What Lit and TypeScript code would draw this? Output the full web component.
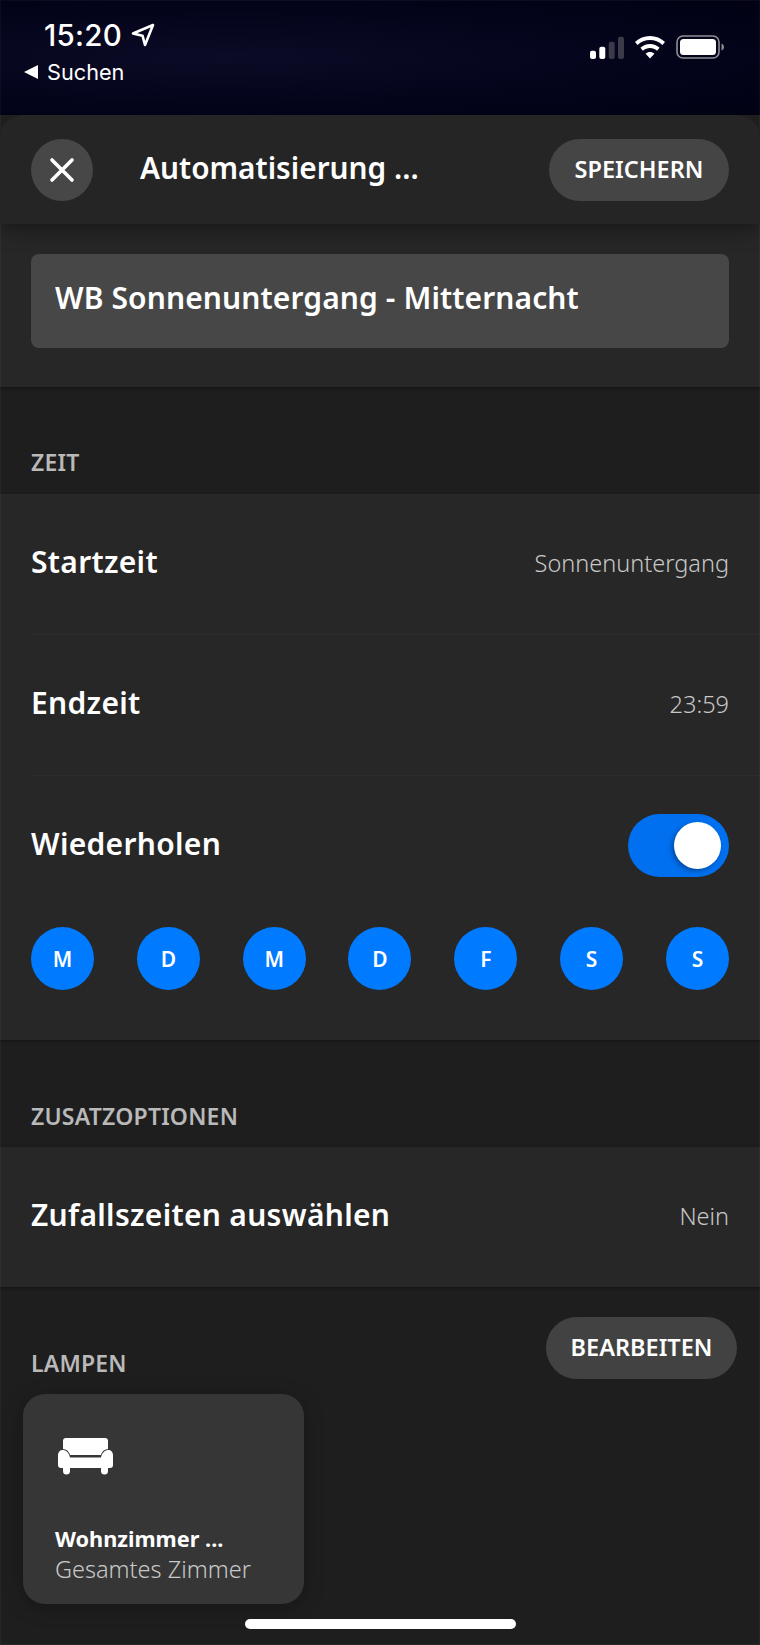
import { LitElement, html, css } from "lit";
import { customElement } from "lit/decorators.js";

const DAYS = ["M", "D", "M", "D", "F", "S", "S"];

@customElement("app-root")
export class AppRoot extends LitElement {
  static styles = css`
    :host { display: block; width: 760px; height: 1645px; overflow: hidden; background: #1e1e1e; font-family: "Noto Sans", sans-serif; color: #fff; }
    .wrap { position: relative; height: 1645px; }
    .wrap::after { content: ""; position: absolute; inset: 0; box-shadow: inset 0 0 0 1px rgba(255,255,255,.04); pointer-events: none; }
    .status { height: 115px; box-sizing: border-box; background: radial-gradient(ellipse at 30% 50%, #0b0b26 0%, #03031a 60%, #020214 100%); display: flex; justify-content: space-between; padding: 18px 36px 0 24px; }
    .left { display: flex; flex-direction: column; }
    .time { display: flex; align-items: center; gap: 9px; font: 500 29.5px/34px Inter, sans-serif; padding-left: 20px; letter-spacing: 0.3px; }
    .back { display: flex; align-items: center; gap: 9px; font: 400 21.7px/26px Inter, sans-serif; margin-top: 7px; }
    .tri { width: 0; height: 0; border: 7px solid transparent; border-right: 14px solid #fff; border-left: 0; }
    .right { display: flex; align-items: center; gap: 10px; height: 28px; margin-top: 15px; }
    .sheet { border-radius: 22px 22px 0 0; overflow: hidden; height: 1530px; display: flex; flex-direction: column; background: #1e1e1e; }
    .head { height: 109px; flex: none; box-sizing: border-box; background: #252525; display: flex; align-items: center; justify-content: space-between; padding: 0 31px; box-shadow: 0 5px 20px rgba(0,0,0,.4); position: relative; z-index: 1; }
    .close { width: 62px; height: 62px; border-radius: 50%; background: #474747; display: flex; align-items: center; justify-content: center; flex: none; }
    .title { flex: 1; margin-left: 47px; font-size: 29.8px; font-weight: 600; padding-bottom: 5px; }
    .pill { height: 62px; border-radius: 31px; background: #454545; display: flex; align-items: center; justify-content: center; font-size: 23.5px; font-weight: 600; box-sizing: border-box; padding-bottom: 2px; }
    .save { width: 180px; }
    .namebox { flex: none; height: 163px; box-sizing: border-box; background: #272727; padding: 30px 31px 0; box-shadow: 0 1px 3px rgba(0,0,0,.4); }
    .name { height: 94px; border-radius: 8px; background: #474747; display: flex; align-items: center; padding: 0 24px 7px; box-sizing: border-box; font-size: 30px; font-weight: 600; letter-spacing: .1px; }
    .label { font-size: 23px; font-weight: 600; color: #b9b9b9; padding-left: 31px; line-height: 28px; letter-spacing: .2px; }
    .l1 { margin-top: 61px; height: 46px; }
    .l2 { margin-top: 62px; height: 45px; }
    .card { background: #272727; box-shadow: 0 1px 3px rgba(0,0,0,.4); padding-left: 31px; flex: none; }
    .row { display: flex; align-items: center; justify-content: space-between; height: 140px; padding-right: 31px; }
    .row + .row { border-top: 1px solid #2d2d2d; }
    .key { font-size: 30px; font-weight: 600; letter-spacing: .3px; padding-bottom: 6px; }
    .val { font-size: 23.5px; font-weight: 300; color: #c8c8c8; padding-bottom: 3px; }
    .toggle { width: 101px; height: 63px; border-radius: 32px; background: #0070f0; display: flex; align-items: center; justify-content: flex-end; padding-right: 8px; box-sizing: border-box; margin-bottom: 2px; }
    .knob { width: 47px; height: 47px; border-radius: 50%; background: #fff; box-shadow: -2px 2px 5px rgba(0,0,0,.35); }
    .days { display: flex; justify-content: space-between; padding: 11px 31px 50px 0; }
    .day { width: 63px; height: 63px; border-radius: 50%; background: #007aff; display: flex; align-items: center; justify-content: center; font-size: 21px; font-weight: 600; }
    .lamps { display: flex; align-items: flex-end; justify-content: space-between; height: 92px; flex: none; padding-right: 23px; }
    .lamps .label { padding-bottom: 2px; }
    .edit { width: 191px; background: #424242; }
    .tile { width: 281px; height: 210px; margin: 15px 0 0 23px; border-radius: 22px; background: #363636; box-sizing: border-box; padding: 44px 31px 0 32px; box-shadow: 0 4px 20px rgba(0,0,0,.25); flex: none; }
    .tile svg { margin-left: 3px; }
    .t1 { font-size: 21.7px; font-weight: 700; line-height: 30px; margin-top: 49px; }
    .t2 { font-size: 23.5px; font-weight: 300; color: #c8c8c8; line-height: 30px; }
    .home { position: absolute; left: 245px; top: 1619px; width: 271px; height: 10px; border-radius: 5px; background: #fff; }
    svg { display: block; }
  `;

  render() {
    return html`
      <div class="wrap">
        <div class="status">
          <div class="left">
            <div class="time">15:20
              <svg width="24" height="24" viewBox="0 0 24 24" fill="none" stroke="#fff" stroke-width="2.6" stroke-linejoin="round"><path d="M22 2 2 10.500l9.500 2.200L14 22z"/></svg>
            </div>
            <div class="back"><span class="tri"></span>Suchen</div>
          </div>
          <div class="right">
            <svg width="34" height="23" viewBox="0 0 34 23">
              <rect x="0" y="14.700" width="6" height="8.300" rx="2" fill="#fff"/>
              <rect x="9.300" y="10.700" width="6" height="12.300" rx="2" fill="#fff"/>
              <rect x="18.700" y="5.700" width="6" height="17.300" rx="2" fill="#3a3a48"/>
              <rect x="28" y="0.700" width="6" height="22.300" rx="2" fill="#3a3a48"/>
            </svg>
            <svg width="32" height="24" viewBox="0 0 32 24" fill="#fff">
              <path d="M16 1c5.800 0 11 2.200 15 6l-2.600 3C25 6.800 20.700 5 16 5S7 6.800 3.600 10L1 7c4-3.800 9.200-6 15-6z"/>
              <path d="M16 9c3.700 0 7 1.400 9.600 3.800L23 15.700c-1.900-1.700-4.300-2.700-7-2.700s-5.100 1-7 2.700l-2.600-2.900C9 10.400 12.300 9 16 9z"/>
              <path d="M16 17c1.700 0 3.200.6 4.400 1.700L16 23.500l-4.400-4.800c1.200-1.100 2.700-1.700 4.400-1.700z"/>
            </svg>
            <svg width="48" height="24" viewBox="0 0 48 24">
              <rect x="1" y="1" width="42" height="22" rx="6" fill="none" stroke="#8f8f94" stroke-width="1.600"/>
              <rect x="4" y="4" width="36" height="16" rx="3.500" fill="#fff"/>
              <path d="M45.500 8.500c1.500.5 2.500 2 2.500 3.500s-1 3-2.500 3.500z" fill="#8f8f94"/>
            </svg>
          </div>
        </div>
        <div class="sheet">
          <div class="head">
            <div class="close">
              <svg width="26" height="26" viewBox="0 0 26 26" stroke="#fff" stroke-width="3.600" stroke-linecap="round"><path d="M3 3l20 20M23 3 3 23"/></svg>
            </div>
            <div class="title">Automatisierung ...</div>
            <div class="pill save">SPEICHERN</div>
          </div>
          <div class="namebox"><div class="name">WB Sonnenuntergang - Mitternacht</div></div>
          <div class="label l1">ZEIT</div>
          <div class="card">
            <div class="row"><span class="key">Startzeit</span><span class="val">Sonnenuntergang</span></div>
            <div class="row"><span class="key">Endzeit</span><span class="val">23:59</span></div>
            <div class="row"><span class="key">Wiederholen</span><span class="toggle"><span class="knob"></span></span></div>
            <div class="days">${DAYS.map((d) => html`<div class="day">${d}</div>`)}</div>
          </div>
          <div class="label l2">ZUSATZOPTIONEN</div>
          <div class="card">
            <div class="row"><span class="key">Zufallszeiten auswählen</span><span class="val">Nein</span></div>
          </div>
          <div class="lamps">
            <div class="label">LAMPEN</div>
            <div class="pill edit">BEARBEITEN</div>
          </div>
          <div class="tile">
            <svg width="55" height="37" viewBox="0 0 55 37" fill="#fff">
              <path d="M5 3a3 3 0 0 1 3-3h39a3 3 0 0 1 3 3v8c-3 .3-6 2-7 6H12c-1-4-4-5.700-7-6z"/>
              <path d="M0 17c0-3 2-5 4.500-5 3.500 0 6.500 2.500 7.500 7.500h31c1-5 4-7.500 7.500-7.500 2.500 0 4.500 2 4.500 5v10a3 3 0 0 1-3 3h-2v3a3.500 3.500 0 0 1-7 0v-3H12v3a3.500 3.500 0 0 1-7 0v-3H3a3 3 0 0 1-3-3z"/>
            </svg>
            <div class="t1">Wohnzimmer ...</div>
            <div class="t2">Gesamtes Zimmer</div>
          </div>
        </div>
        <div class="home"></div>
      </div>
    `;
  }
}
